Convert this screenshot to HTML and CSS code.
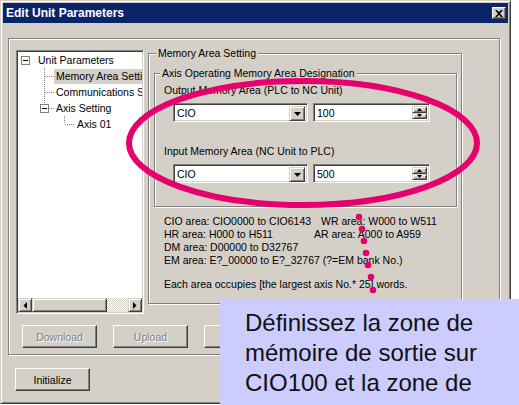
FILE: index.html
```html
<!DOCTYPE html>
<html>
<head>
<meta charset="utf-8">
<link rel="stylesheet" href="styles.css">
</head>
<body>
<div class="window">
  <div class="titlebar">
    <span class="title">Edit Unit Parameters</span>
    <span class="close"><svg width="8" height="7" viewBox="0 0 8 7"><path d="M0 0h2l2 2 2-2h2L5 3.5 8 7H6L4 5 2 7H0l3-3.5z" fill="#000"/></svg></span>
  </div>
  <div class="frame">
    <div class="top">
      <div class="tree">
        <div class="tree-items">
          <div class="row">
            <svg class="lines l0" width="18" height="16"><rect x="3.5" y="4.5" width="8" height="8" fill="#fff" stroke="#808080"/><rect x="5" y="8" width="5" height="1" fill="#000"/></svg>
            <span class="label">Unit Parameters</span>
          </div>
          <div class="row">
            <svg class="lines" width="36" height="16"><line x1="26.5" y1="0" x2="26.5" y2="16" stroke="#808080" stroke-dasharray="1 1"/><line x1="27" y1="8.5" x2="36" y2="8.5" stroke="#808080" stroke-dasharray="1 1"/></svg>
            <span class="label sel">Memory Area Setting</span>
          </div>
          <div class="row">
            <svg class="lines" width="36" height="16"><line x1="26.5" y1="0" x2="26.5" y2="16" stroke="#808080" stroke-dasharray="1 1"/><line x1="27" y1="8.5" x2="36" y2="8.5" stroke="#808080" stroke-dasharray="1 1"/></svg>
            <span class="label">Communications Setting</span>
          </div>
          <div class="row">
            <svg class="lines" width="36" height="16"><line x1="26.5" y1="0" x2="26.5" y2="4" stroke="#808080" stroke-dasharray="1 1"/><line x1="31" y1="8.5" x2="36" y2="8.5" stroke="#808080" stroke-dasharray="1 1"/><rect x="22.5" y="4.5" width="8" height="8" fill="#fff" stroke="#808080"/><rect x="24" y="8" width="5" height="1" fill="#000"/></svg>
            <span class="label">Axis Setting</span>
          </div>
          <div class="row">
            <svg class="lines" width="57" height="16"><line x1="46.5" y1="0" x2="46.5" y2="8" stroke="#808080" stroke-dasharray="1 1"/><line x1="47" y1="8.5" x2="56" y2="8.5" stroke="#808080" stroke-dasharray="1 1"/></svg>
            <span class="label">Axis 01</span>
          </div>
        </div>
        <div class="hscroll">
          <span class="sbtn"><svg width="4" height="7" viewBox="0 0 4 7"><path d="M4 0v7L0.5 3.5z" fill="#000"/></svg></span>
          <span class="thumb"></span>
          <span class="track"></span>
          <span class="sbtn"><svg width="4" height="7" viewBox="0 0 4 7"><path d="M0 0v7L3.5 3.5z" fill="#000"/></svg></span>
        </div>
      </div>
      <div class="group mem">
        <span class="legend">Memory Area Setting</span>
        <div class="group axis">
          <span class="legend">Axis Operating Memory Area Designation</span>
          <div class="field-label">Output Memory Area (PLC to NC Unit)</div>
          <div class="field-row">
            <div class="combo"><span class="val">CIO</span><span class="arrow"><svg width="7" height="4" viewBox="0 0 7 4"><path d="M0 0h7L3.5 4z" fill="#000"/></svg></span></div>
            <div class="spin"><span class="val">100</span><span class="btns"><span class="sb"><svg width="5" height="3" viewBox="0 0 5 3"><path d="M2.5 0L5 3H0z" fill="#000"/></svg></span><span class="sb"><svg width="5" height="3" viewBox="0 0 5 3"><path d="M0 0h5L2.5 3z" fill="#000"/></svg></span></span></div>
          </div>
          <div class="field-label second">Input Memory Area (NC Unit to PLC)</div>
          <div class="field-row">
            <div class="combo"><span class="val">CIO</span><span class="arrow"><svg width="7" height="4" viewBox="0 0 7 4"><path d="M0 0h7L3.5 4z" fill="#000"/></svg></span></div>
            <div class="spin"><span class="val">500</span><span class="btns"><span class="sb"><svg width="5" height="3" viewBox="0 0 5 3"><path d="M2.5 0L5 3H0z" fill="#000"/></svg></span><span class="sb"><svg width="5" height="3" viewBox="0 0 5 3"><path d="M0 0h5L2.5 3z" fill="#000"/></svg></span></span></div>
          </div>
        </div>
        <div class="info">
          <div><span class="c1">CIO area: CIO0000 to CIO6143</span>WR area: W000 to W511</div>
          <div><span class="c2">HR area: H000 to H511</span>AR area: A000 to A959</div>
          <div>DM area: D00000 to D32767</div>
          <div>EM area: E?_00000 to E?_32767 (?=EM bank No.)</div>
          <div class="gap">Each area occupies [the largest axis No.* 25] words.</div>
        </div>
      </div>
    </div>
    <div class="buttons">
      <span class="btn disabled">Download</span>
      <span class="btn disabled">Upload</span>
      <span class="btn"></span>
    </div>
  </div>
  <div class="bottom">
    <span class="btn">Initialize</span>
  </div>
</div>

<div class="callout">Définissez la zone de<br>mémoire de sortie sur<br>CIO100 et la zone de</div>

<svg class="annot" width="519" height="405" viewBox="0 0 519 405">
  <ellipse cx="303" cy="143" rx="174" ry="62" fill="none" stroke="#e6006e" stroke-width="6"/>
  <g fill="#e6006e">
    <circle cx="359" cy="217" r="3.3"/>
    <circle cx="362" cy="229" r="3.3"/>
    <circle cx="364" cy="241" r="3.3"/>
    <circle cx="366" cy="253" r="3.3"/>
    <circle cx="368" cy="265" r="3.3"/>
    <circle cx="371" cy="277" r="3.3"/>
    <circle cx="373" cy="290" r="3.3"/>
  </g>
</svg>
</body>
</html>
```

FILE: styles.css
```css
body {
  margin: 0;
  width: 519px;
  height: 405px;
  position: relative;
  overflow: hidden;
  background: #fff;
  font-family: "Liberation Sans", Arial, sans-serif;
  font-size: 10.5px;
  color: #000;
}

.window {
  width: 511px;
  height: 404px;
  box-sizing: border-box;
  border: 1px solid;
  border-color: #d4d0c8 #404040 #404040 #d4d0c8;
  box-shadow: inset 1px 1px #fff, inset -1px -1px #808080;
  padding: 2px;
  background: #d4d0c8;
}

.titlebar {
  height: 20px;
  background: #0a246a;
  display: flex;
  align-items: center;
  justify-content: space-between;
  padding: 0 2px 0 3px;
  color: #fff;
  font-weight: bold;
  font-size: 12px;
}

.close {
  width: 14px;
  height: 12px;
  box-sizing: border-box;
  background: #d4d0c8;
  border: 1px solid;
  border-color: #fff #404040 #404040 #fff;
  box-shadow: inset -1px -1px #808080;
  display: flex;
  align-items: center;
  justify-content: center;
}
.close svg { display: block; }

.frame {
  margin: 15px 8px 0 5px;
  height: 317px;
  box-sizing: border-box;
  border: 1px solid #808080;
  box-shadow: inset 1px 1px #fff, 1px 1px #fff;
  padding: 11px 0 0 7px;
}

.top {
  display: flex;
  align-items: flex-start;
  height: 264px;
}

.tree {
  width: 128px;
  height: 264px;
  box-sizing: border-box;
  border: 1px solid;
  border-color: #808080 #fff #fff #808080;
  box-shadow: inset 1px 1px #404040, inset -1px -1px #d4d0c8;
  padding: 1px;
  background: #fff;
  display: flex;
  flex-direction: column;
  overflow: hidden;
}

.tree-items {
  flex: 1;
  overflow: hidden;
}

.row {
  height: 16px;
  display: flex;
  align-items: center;
  white-space: nowrap;
}
.row .lines { flex: none; display: block; }

.label {
  padding: 0 2px;
  line-height: 15px;
}
.label.sel { background: #d4d0c8; }

.hscroll {
  height: 14px;
  display: flex;
  flex: none;
}
.sbtn {
  width: 14px;
  box-sizing: border-box;
  background: #d4d0c8;
  border: 1px solid;
  border-color: #d4d0c8 #404040 #404040 #d4d0c8;
  box-shadow: inset 1px 1px #fff, inset -1px -1px #808080;
  display: flex;
  align-items: center;
  justify-content: center;
}
.thumb {
  width: 75px;
  box-sizing: border-box;
  background: #d4d0c8;
  border: 1px solid;
  border-color: #d4d0c8 #404040 #404040 #d4d0c8;
  box-shadow: inset 1px 1px #fff, inset -1px -1px #808080;
}
.track {
  flex: 1;
  background-color: #fff;
  background-image: repeating-conic-gradient(#d4d0c8 0 25%, #fff 0 50%);
  background-size: 2px 2px;
}

.group {
  box-sizing: border-box;
  border: 1px solid #808080;
  box-shadow: inset 1px 1px #fff, 1px 1px #fff;
}

.legend {
  display: block;
  width: max-content;
  height: 13px;
  line-height: 13px;
  margin: -7px 0 0 7px;
  padding: 0 2px;
  background: #d4d0c8;
}

.mem {
  margin: 3px 0 0 4px;
  width: 314px;
  height: 251px;
}

.axis {
  margin: 13px 4px 0 5px;
  height: 134px;
}
.axis .legend { margin-left: 5px; }

.field-label {
  margin: 4px 0 0 9px;
  line-height: 13px;
}
.field-label.second { margin-top: 23px; }

.field-row {
  display: flex;
  gap: 5px;
  margin: 6px 0 0 18px;
}

.combo, .spin {
  height: 19px;
  box-sizing: border-box;
  border: 1px solid;
  border-color: #808080 #fff #fff #808080;
  box-shadow: inset 1px 1px #404040, inset -1px -1px #d4d0c8;
  padding: 2px;
  background: #fff;
  display: flex;
}
.combo { width: 135px; }
.spin { width: 117px; }

.val {
  flex: 1;
  line-height: 15px;
  padding-left: 1px;
}

.arrow {
  width: 16px;
  height: 15px;
  box-sizing: border-box;
  background: #d4d0c8;
  border: 1px solid;
  border-color: #d4d0c8 #404040 #404040 #d4d0c8;
  box-shadow: inset 1px 1px #fff, inset -1px -1px #808080;
  display: flex;
  align-items: center;
  justify-content: center;
}

.btns {
  width: 15px;
  display: flex;
  flex-direction: column;
}
.sb {
  flex: 1;
  box-sizing: border-box;
  background: #d4d0c8;
  border: 1px solid;
  border-color: #d4d0c8 #404040 #404040 #d4d0c8;
  box-shadow: inset 1px 1px #fff, inset -1px -1px #808080;
  display: flex;
  align-items: center;
  justify-content: center;
}
.arrow svg, .sb svg, .sbtn svg { display: block; }

.info {
  margin: 8px 0 0 15px;
  line-height: 13px;
  white-space: nowrap;
}
.info .c1 { display: inline-block; width: 157px; }
.info .c2 { display: inline-block; width: 150px; }
.info .gap { margin-top: 11px; }

.buttons {
  display: flex;
  gap: 16px;
  margin: 11px 0 0 6px;
}

.bottom {
  margin: 13px 0 0 12px;
  display: flex;
}

.btn {
  width: 75px;
  height: 23px;
  box-sizing: border-box;
  border: 1px solid;
  border-color: #fff #404040 #404040 #fff;
  box-shadow: inset -1px -1px #808080;
  background: #d4d0c8;
  display: flex;
  align-items: center;
  justify-content: center;
}
.btn.disabled {
  color: #808080;
  text-shadow: 1px 1px #fff;
}

.callout {
  position: absolute;
  left: 220px;
  top: 299px;
  width: 299px;
  height: 106px;
  box-sizing: border-box;
  padding: 9px 0 0 25px;
  background: #ccccff;
  color: #111;
  font-size: 24px;
  line-height: 30px;
  white-space: nowrap;
}

.annot {
  position: absolute;
  left: 0;
  top: 0;
  pointer-events: none;
}
```
